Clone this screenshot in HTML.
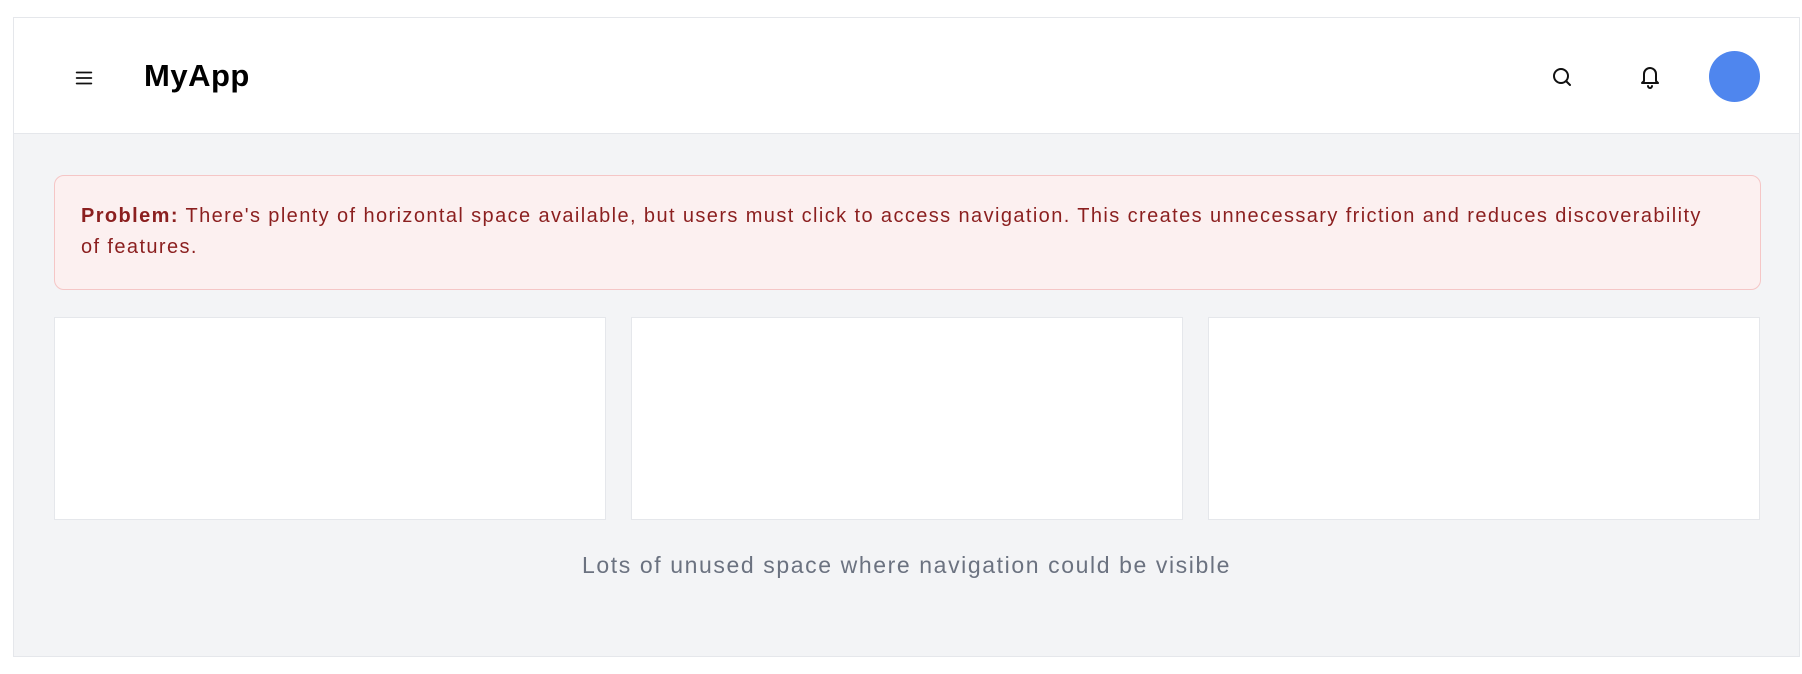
<!DOCTYPE html>
<html><head><style>
*{box-sizing:border-box;margin:0;padding:0}
body{width:1802px;height:674px;background:#fff;font-family:"Liberation Sans",sans-serif;position:relative;overflow:hidden}
.frame{position:absolute;left:13px;top:17px;width:1787px;height:640px;border:1px solid #e5e7eb;background:#f3f4f6}
.hdr{position:absolute;left:0;top:0;right:0;height:116px;background:#fff;border-bottom:1px solid #e5e7eb}
.title{position:absolute;left:130px;top:40px;font-size:31px;font-weight:bold;color:#000;line-height:36px;letter-spacing:0.5px}
.alert{position:absolute;left:40px;top:157px;width:1707px;height:115px;background:#fcf0f0;border:1px solid #f5c6c6;border-radius:10px;padding:25px 46px 25px 26px;color:#8b1f1f;font-size:20px;line-height:31px;letter-spacing:1.4px}
.card{position:absolute;top:299px;height:203px;width:552px;background:#fff;border:1px solid #e5e7eb}
.foot{position:absolute;left:0;right:0;top:534px;text-align:center;color:#6b7280;font-size:23px;letter-spacing:1.6px}
.av{position:absolute;left:1695px;top:33px;width:51px;height:51px;border-radius:50%;background:#4f86ee}
</style></head><body>
<div class="frame">
<div class="hdr">
<svg style="position:absolute;left:59px;top:49px" width="22" height="22" viewBox="0 0 24 24" fill="none" stroke="#111" stroke-width="2" stroke-linecap="round"><path d="M4 6h16M4 12h16M4 18h16"/></svg>
<div class="title">MyApp</div>
<svg style="position:absolute;left:1536px;top:47px" width="24" height="24" viewBox="0 0 24 24" fill="none" stroke="#111" stroke-width="2" stroke-linecap="round"><circle cx="11" cy="11" r="7"/><path d="M16.5 16.5L20 20"/></svg>
<svg style="position:absolute;left:1624px;top:46px" width="24" height="26" viewBox="0 0 24 26" fill="none" stroke="#111" stroke-width="2" stroke-linecap="round" stroke-linejoin="round"><path d="M6 17V10a6 6 0 0 1 12 0v7l2 2H4z"/><path d="M10 22a2 2 0 0 0 4 0"/></svg>
<div class="av"></div>
</div>
<div class="alert"><b>Problem:</b> There's plenty of horizontal space available, but users must click to access navigation. This creates unnecessary friction and reduces discoverability of features.</div>
<div class="card" style="left:40px"></div>
<div class="card" style="left:617px"></div>
<div class="card" style="left:1194px"></div>
<div class="foot">Lots of unused space where navigation could be visible</div>
</div>
</body></html>
